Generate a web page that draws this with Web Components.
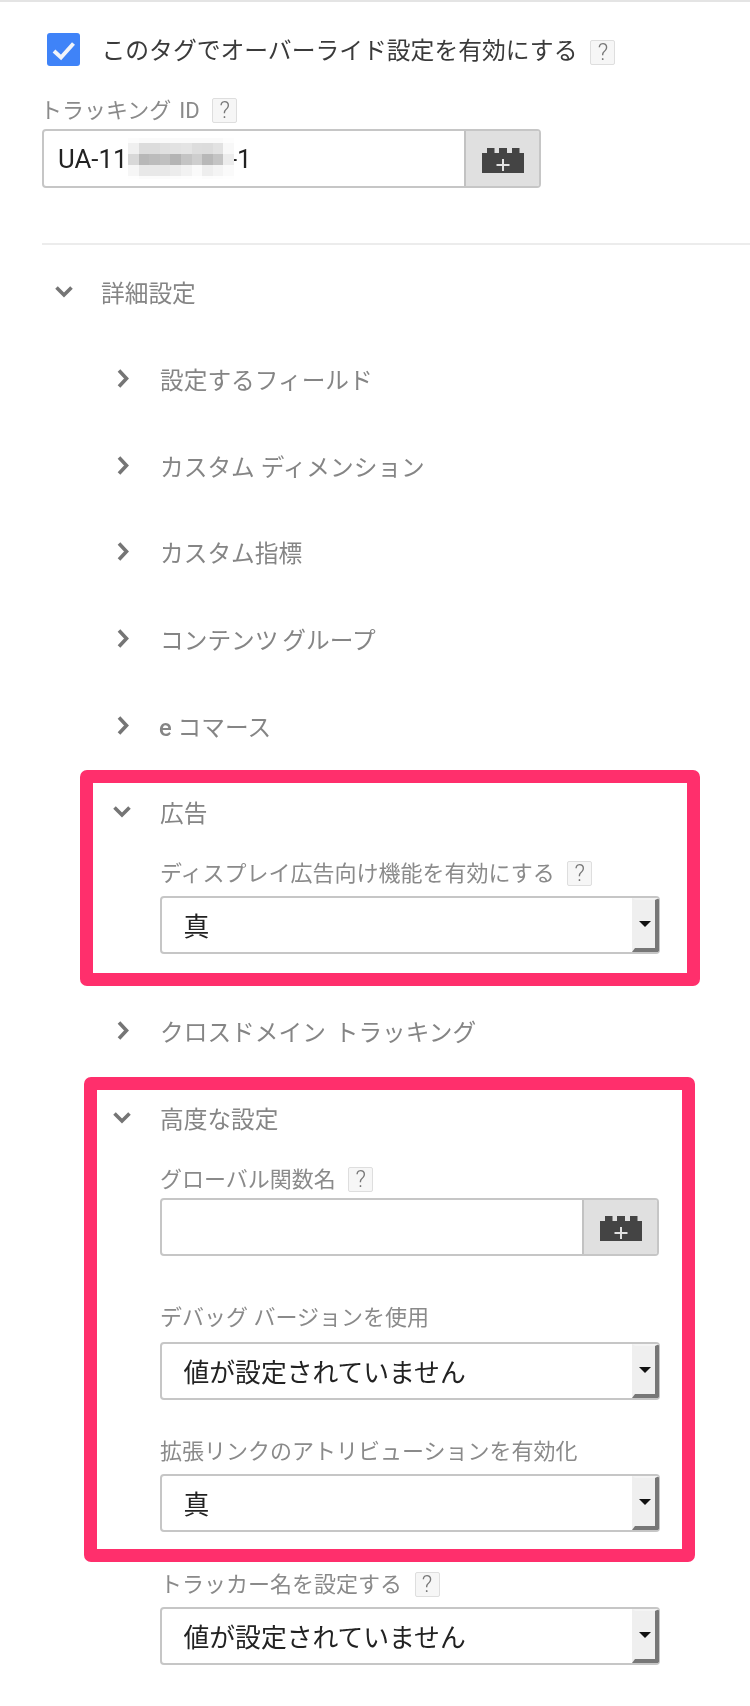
<!DOCTYPE html>
<html lang="ja">
<head>
<meta charset="utf-8">
<title>トラッキング設定</title>
<style>
html,body{margin:0;padding:0;background:#fff}
body{font-family:Roboto,"Noto Sans CJK JP","Noto Sans",sans-serif;width:750px}
</style>
</head>
<body>
<gtm-page>
  <gtm-check>このタグでオーバーライド設定を有効にする</gtm-check>
  <gtm-label help style="margin:32px 0 6px 40px;word-spacing:2.5px">トラッキング ID</gtm-label>
  <gtm-input style="margin-left:42px;width:499px;height:59px"><span>UA-11</span><gtm-mosaic></gtm-mosaic><span style="margin-left:-4px">-1</span></gtm-input>
  <gtm-rule></gtm-rule>
  <gtm-section open level="0">詳細設定</gtm-section>
  <gtm-section level="1">設定するフィールド</gtm-section>
  <gtm-section level="1">カスタム ディメンション</gtm-section>
  <gtm-section level="1">カスタム指標</gtm-section>
  <gtm-section level="1" style="word-spacing:-2px">コンテンツ グループ</gtm-section>
  <gtm-section level="1"><b style="font-weight:500;margin-left:-1px">e</b> コマース</gtm-section>
  <gtm-section open level="1">広告</gtm-section>
  <gtm-label help style="margin:3px 0 10px 160px">ディスプレイ広告向け機能を有効にする</gtm-label>
  <gtm-select>真</gtm-select>
  <gtm-section level="1" style="margin-top:36px;word-spacing:3px">クロスドメイン トラッキング</gtm-section>
  <gtm-section open level="1">高度な設定</gtm-section>
  <gtm-label help style="margin:4px 0 6px 160px">グローバル関数名</gtm-label>
  <gtm-input style="margin-left:160px;width:499px;height:58px"></gtm-input>
  <gtm-label style="margin:49px 0 12px 160px">デバッグ バージョンを使用</gtm-label>
  <gtm-select>値が設定されていません</gtm-select>
  <gtm-label style="margin:39px 0 10px 160px">拡張リンクのアトリビューションを有効化</gtm-label>
  <gtm-select>真</gtm-select>
  <gtm-label help style="margin:40px 0 10px 160px">トラッカー名を設定する</gtm-label>
  <gtm-select>値が設定されていません</gtm-select>
  <gtm-highlight style="left:80px;top:770px;width:620px;height:216px"></gtm-highlight>
  <gtm-highlight style="left:84px;top:1077px;width:611px;height:485px"></gtm-highlight>
</gtm-page>
<script>
function shadow(el, html){ el.attachShadow({mode:'open'}).innerHTML = html; }

class GtmPage extends HTMLElement{
  constructor(){super();shadow(this,`<style>
    :host{display:block;position:relative;width:750px;height:1706px;overflow:hidden;box-sizing:border-box;
      border-top:2px solid #e4e4e4;background:#fff;filter:blur(.45px)}
  </style><slot></slot>`);}
}
class GtmHelp extends HTMLElement{
  constructor(){super();shadow(this,`<style>
    :host{display:flex;flex:none;align-items:center;justify-content:center;box-sizing:border-box;width:25px;height:25px;
      background:#f6f6f6;border:1px solid #dedede;border-radius:2px;color:#777;font-size:23px;font-weight:300;line-height:1}
  </style>?`);}
}
class GtmCheck extends HTMLElement{
  constructor(){super();shadow(this,`<style>
    :host{display:flex;align-items:center;margin:31px 0 0 47px;height:33px;color:#3a3a3a;font-size:23.800px;line-height:33px;white-space:nowrap}
    .box{flex:none;width:33px;height:33px;border-radius:3px;background:#3f83f8;margin-right:21.500px}
    svg{display:block}
    gtm-help{margin-left:13px;margin-top:6px}
    span{padding-top:3px}
  </style><div class="box"><svg width="33" height="33" viewBox="0 0 33 33"><polyline points="7,18 14,24.5 26.5,10.5" fill="none" stroke="#f1f4fa" stroke-width="4"/></svg></div><span><slot></slot></span><gtm-help></gtm-help>`);}
}
class GtmLabel extends HTMLElement{
  constructor(){super();shadow(this,`<style>
    :host{display:flex;align-items:center;height:25px;color:#8a8a8a;font-size:22px;line-height:25px;white-space:nowrap}
    gtm-help{margin-left:12.5px}
  </style><span><slot></slot></span>${this.hasAttribute('help')?'<gtm-help></gtm-help>':''}`);}
}
class GtmBrick extends HTMLElement{
  constructor(){super();shadow(this,`<style>
    :host{display:block;width:42px;height:25px;margin-top:4px}
    svg{display:block}
  </style><svg width="42" height="25" viewBox="0 0 42 25"><path fill="#444" d="M5 0h7.500v5H17V0h8v5h5V0h7.500v5H42v20H0V5h5z"/><path d="M21 11v12M14.500 17h13" stroke="#e2e2e2" stroke-width="2" fill="none"/></svg>`);}
}
class GtmInput extends HTMLElement{
  constructor(){super();shadow(this,`<style>
    :host{display:flex;box-sizing:border-box;border:2px solid #c6c6c6;border-radius:4px;background:#fff;color:#222;
      font-size:25.800px;overflow:hidden}
    .val{flex:1;display:flex;align-items:center;padding-left:14px;white-space:nowrap;min-width:0}
    .btn{flex:none;width:75px;box-sizing:border-box;border-left:2px solid #c2c2c2;background:#e0e0e0;display:flex;align-items:center;justify-content:center}
  </style><div class="val"><slot></slot></div><div class="btn"><gtm-brick></gtm-brick></div>`);}
}
class GtmMosaic extends HTMLElement{
  constructor(){super();
    const rows=[
      ['5px',['fc','fa','fa','fa','fa','fa','fa','fa','fa','fd']],
      ['11px',['f0','dc','dc','e0','e2','e4','dd','dc','e2','f8']],
      ['11px',['d8','b8','bc','c0','b4','c4','ce','b8','c4','ec']],
      ['11px',['f6','e8','e8','e8','ec','f2','fa','ee','f4','fa']],
      ['3px',['fe','fb','fb','fb','fc','fd','fe','fc','fd','fe']]
    ];
    let cells='';
    rows.forEach(r=>r[1].forEach(c=>{cells+=`<i style="background:#${c}${c}${c}"></i>`;}));
    shadow(this,`<style>
      :host{display:grid;flex:none;z-index:1;position:relative;margin-left:.5px;width:106px;height:41px;
        grid-template-columns:repeat(10,1fr);grid-template-rows:${rows.map(r=>r[0]).join(' ')}}
    </style>${cells}`);}
}
class GtmSelect extends HTMLElement{
  constructor(){super();shadow(this,`<style>
    :host{display:flex;box-sizing:border-box;margin-left:160px;width:500px;height:58px;border:2px solid #c6c6c6;border-right-width:1px;border-radius:4px;
      background:#fff;color:#222;font-size:25.800px;overflow:hidden}
    .val{flex:1;display:flex;align-items:center;padding-left:21.500px;white-space:nowrap}
    .arrow{flex:none;box-sizing:border-box;width:27px;display:flex;align-items:center;justify-content:center;background:#efefef;
      border-style:solid;border-width:2px 4.500px 4px 3px;border-color:#f4f4f4 #777 #777 #efefef}
    .tri{width:0;height:0;border-style:solid;border-width:6px 6px 0 6px;border-color:#111 transparent transparent transparent;margin-left:-1px}
  </style><div class="val"><slot></slot></div><div class="arrow"><div class="tri"></div></div>`);}
}
class GtmRule extends HTMLElement{
  constructor(){super();shadow(this,`<style>
    :host{display:block;height:2px;margin:55px 0 6px 42px;background:#ececec}
  </style>`);}
}
class GtmSection extends HTMLElement{
  constructor(){super();
    const open=this.hasAttribute('open'), lvl=this.getAttribute('level')==='0';
    const path=open?'1.500,2.500 9,10 16.500,2.500':'6,-1.500 13.500,6.500 6,14.500';
    shadow(this,`<style>
      :host{display:flex;align-items:center;height:86.67px;padding-left:${lvl?55:113}px;color:#858585;font-size:23.700px;white-space:nowrap}
      svg{flex:none;display:block;overflow:visible;margin-right:${lvl?28:29}px}
      span{padding-bottom:4px}
    </style><svg width="18" height="18" viewBox="0 0 18 18"><polyline points="${path}" fill="none" stroke="#757575" stroke-width="3.600"/></svg><span><slot></slot></span>`);}
}
class GtmHighlight extends HTMLElement{
  constructor(){super();shadow(this,`<style>
    :host{display:block;position:absolute;box-sizing:border-box;margin-top:-2px;border:13px solid #ff2f6c;border-radius:7px;pointer-events:none}
  </style>`);}
}
[['gtm-page',GtmPage],['gtm-help',GtmHelp],['gtm-check',GtmCheck],['gtm-label',GtmLabel],['gtm-brick',GtmBrick],
 ['gtm-input',GtmInput],['gtm-mosaic',GtmMosaic],['gtm-select',GtmSelect],['gtm-rule',GtmRule],['gtm-section',GtmSection],['gtm-highlight',GtmHighlight]]
 .forEach(([n,c])=>customElements.define(n,c));
</script>
</body>
</html>
